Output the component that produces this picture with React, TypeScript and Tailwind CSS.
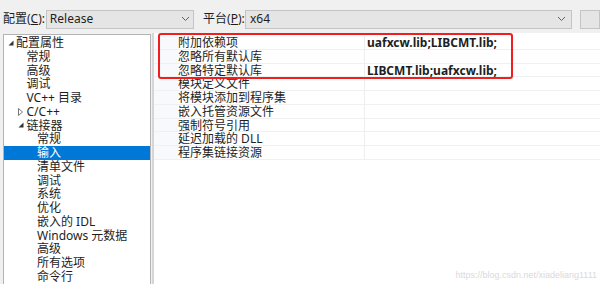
import React from "react";

type TreeItem = { label: string; level: number; arrow?: "open" | "closed"; selected?: boolean };

const tree: TreeItem[] = [
  { label: "配置属性", level: 0, arrow: "open" },
  { label: "常规", level: 1 },
  { label: "高级", level: 1 },
  { label: "调试", level: 1 },
  { label: "VC++ 目录", level: 1 },
  { label: "C/C++", level: 1, arrow: "closed" },
  { label: "链接器", level: 1, arrow: "open" },
  { label: "常规", level: 2 },
  { label: "输入", level: 2, selected: true },
  { label: "清单文件", level: 2 },
  { label: "调试", level: 2 },
  { label: "系统", level: 2 },
  { label: "优化", level: 2 },
  { label: "嵌入的 IDL", level: 2 },
  { label: "Windows 元数据", level: 2 },
  { label: "高级", level: 2 },
  { label: "所有选项", level: 2 },
  { label: "命令行", level: 2 },
];

const props: { name: string; value?: string }[] = [
  { name: "附加依赖项", value: "uafxcw.lib;LIBCMT.lib;" },
  { name: "忽略所有默认库" },
  { name: "忽略特定默认库", value: "LIBCMT.lib;uafxcw.lib;" },
  { name: "模块定义文件" },
  { name: "将模块添加到程序集" },
  { name: "嵌入托管资源文件" },
  { name: "强制符号引用" },
  { name: "延迟加载的 DLL" },
  { name: "程序集链接资源" },
];

const font = { fontFamily: '"Noto Sans", "Noto Sans CJK SC", sans-serif' };

function Chevron() {
  return (
    <svg width="9" height="6" viewBox="0 0 9 6" className="shrink-0">
      <path d="M1 1l3.5 3.5L8 1" fill="none" stroke="#606060" strokeWidth="1" />
    </svg>
  );
}

function Arrow({ kind }: { kind: "open" | "closed" }) {
  if (kind === "open") {
    return (
      <svg width="6" height="6" viewBox="0 0 6 6">
        <path d="M5.5 0.5V5.5H0.5Z" fill="#333" />
      </svg>
    );
  }
  return (
    <svg width="6" height="8" viewBox="0 0 6 8">
      <path d="M0.5 0.5L4.5 4L0.5 7.5Z" fill="none" stroke="#777" strokeWidth="1" />
    </svg>
  );
}

export default function App() {
  return (
    <div
      className="relative w-[600px] h-[284px] overflow-hidden bg-[#f0f0f0] text-[12px] text-[#1e1e1e]"
      style={font}
    >
      {/* top bar */}
      <div className="flex items-center h-[34px] pt-[4px]">
        <span className="ml-[3px] w-[44px]">
          配置(<span className="underline">C</span>):
        </span>
        <div className="flex items-center justify-between w-[152px] h-[19px] border border-[#c4c4c4] bg-[#e5e5e5] pl-[3px] pr-[3px]">
          <span>Release</span>
          <Chevron />
        </div>
        <span className="ml-[9px] w-[43px]">
          平台(<span className="underline">P</span>):
        </span>
        <div className="flex items-center justify-between w-[336px] h-[19px] border border-[#c4c4c4] bg-[#e5e5e5] pl-[4px] pr-[5px]">
          <span>x64</span>
          <Chevron />
        </div>
        <div className="ml-[8px] w-[20px] h-[19px] border border-[#c4c4c4] bg-[#e5e5e5]" />
      </div>

      <div className="flex items-start">
        {/* tree */}
        <div className="ml-[3px] w-[148px] h-[260px] border border-[#b4b4b4] bg-white pt-[1px]">
          {tree.map((t, i) => (
            <div
              key={i}
              className={`flex items-center h-[13.75px] leading-[13.75px] ${
                t.selected ? "bg-[#0078d7] text-white" : ""
              }`}
              style={{ paddingLeft: 2 + t.level * 10.5 }}
            >
              <span className="w-[9px] flex justify-center items-center">
                {t.arrow && <Arrow kind={t.arrow} />}
              </span>
              <span className="ml-[1px] whitespace-nowrap">{t.label}</span>
            </div>
          ))}
        </div>

        {/* property grid */}
        <div className="ml-[1px] -mt-[1px] flex-1 h-[260px] border-l-2 border-[#d6d6d6] bg-white pt-[3px]">
          {props.map((p, i) => (
            <div key={i} className="flex h-[13.75px] leading-[13.75px] border-b border-[#f0f0f0]">
              <div className="w-[24px] bg-[#f7f9fc]" />
              <div className="w-[187px] whitespace-nowrap border-r border-[#eeeeee]">{p.name}</div>
              <div className="pl-[2px] font-bold whitespace-nowrap">{p.value}</div>
            </div>
          ))}
        </div>
      </div>

      {/* highlight box */}
      <div className="absolute left-[158px] top-[33px] w-[355px] h-[46px] border-[2.5px] border-[#f01e1e] rounded-[3px]" />

      <div
        className="absolute right-[3px] top-[269px] text-[9px] text-[#dadada]"
        style={{ fontFamily: '"Liberation Sans", sans-serif' }}
      >
        https://blog.csdn.net/xiadeliang1111
      </div>
    </div>
  );
}
